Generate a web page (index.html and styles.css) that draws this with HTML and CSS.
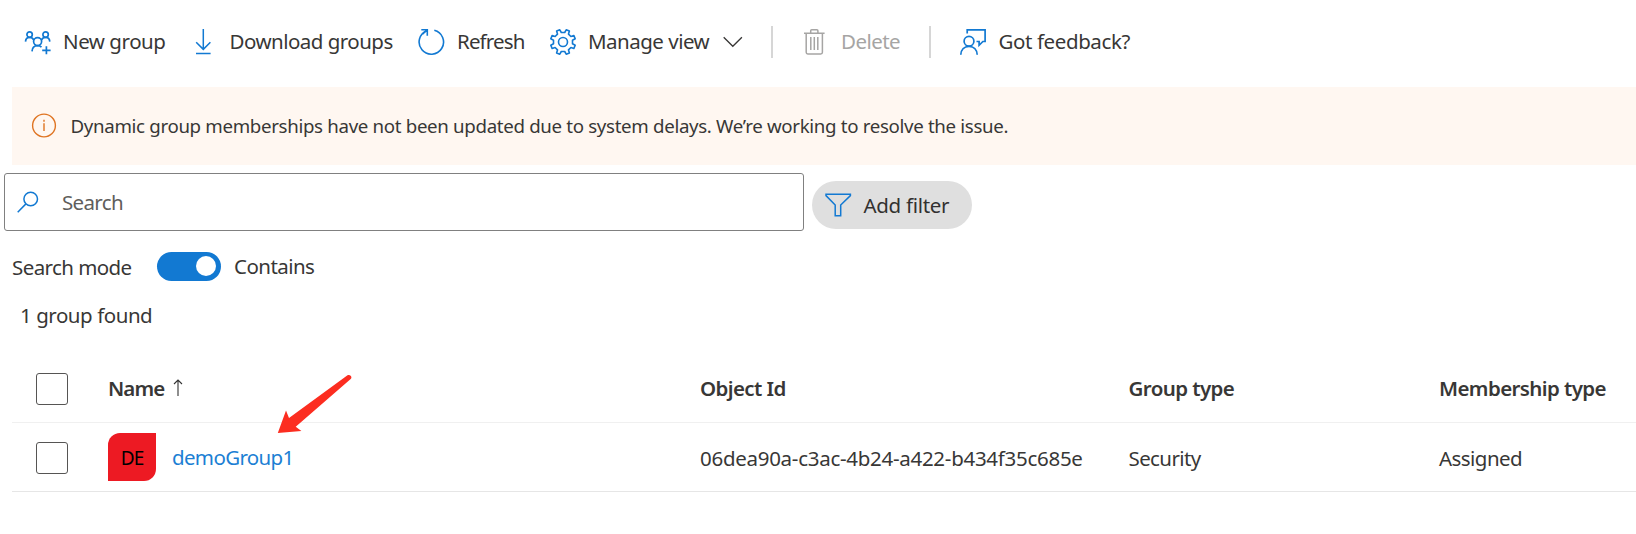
FILE: index.html
```
<!DOCTYPE html>
<html lang="en">
<head>
<meta charset="utf-8">
<title>Groups</title>
<link rel="stylesheet" href="styles.css">
</head>
<body>
<main class="page">
  <nav class="toolbar">
    <button class="cmd cmd-new">
      <svg class="icon" width="28" height="26" viewBox="0 0 28 26" fill="none" stroke="currentColor" stroke-width="1.7">
        <circle cx="5.6" cy="5.600" r="2.700"/><circle cx="21.600" cy="5.600" r="2.700"/><circle cx="13.600" cy="12.600" r="4"/>
        <path d="M1.500 12.600C1.700 10 3.300 8.400 5.600 8.400c1.900 0 3.400 1 4.200 2.600M25.800 12.600c-.2-2.600-1.900-4.200-4.200-4.200-1.900 0-3.400 1-4.200 2.600M8 22.400c.2-3.800 2.400-5.800 5.600-5.800 1.500 0 2.900.5 3.900 1.500M22.400 17.300v8M18.200 21.300h8.400"/>
      </svg>
      <span class="t-new">New group</span>
    </button>
    <button class="cmd cmd-download">
      <svg class="icon" width="18" height="28" viewBox="0 0 18 28" fill="none" stroke="currentColor" stroke-width="1.500">
        <path d="M9.300 1v20.500M2.200 14.200l7.100 7.200 7.100-7.200M2 25.500h14.600"/>
      </svg>
      <span class="t-download">Download groups</span>
    </button>
    <button class="cmd cmd-refresh">
      <svg class="icon" width="28" height="28" viewBox="0 0 28 28" fill="none" stroke="currentColor" stroke-width="1.600">
        <path d="M17.300 2.200A12.200 12.200 0 1 1 9.800 2.700M4.300 1.700h6v6"/>
        <path d="M10.300 1.700L5.500 6.100"/>
      </svg>
      <span class="t-refresh">Refresh</span>
    </button>
    <button class="cmd cmd-view">
      <svg class="icon" width="28" height="28" viewBox="0 0 28 28" fill="none" stroke="currentColor" stroke-width="1.600" stroke-linejoin="round">
        <circle cx="14" cy="14" r="4.500"/>
        <path d="M10.800 1.800L12.300 4.500h3.400l1.500-2.700 3.200 1.300-.9 3 2.400 2.400 3-.9 1.300 3.200-2.700 1.500v3.400l2.700 1.500-1.300 3.200-3-.9-2.400 2.400.9 3-3.200 1.300-1.500-2.700h-3.400l-1.500 2.700-3.200-1.300.9-3-2.400-2.400-3 .9-1.300-3.200 2.700-1.500v-3.400l-2.700-1.500 1.300-3.200 3 .9 2.400-2.400-.9-3z"/>
      </svg>
      <span class="t-view">Manage view</span>
      <svg class="chevron" width="20" height="12" viewBox="0 0 20 12" fill="none" stroke="currentColor" stroke-width="1.300">
        <path d="M.7 1.200l9.100 9.100 9.100-9.100"/>
      </svg>
    </button>
    <span class="divider"></span>
    <button class="cmd cmd-delete" disabled>
      <svg class="icon" width="23" height="28" viewBox="0 0 23 28" fill="none" stroke="currentColor" stroke-width="1.500">
        <path d="M1 5.300h20.600M7.700 5V2.800c0-.6.4-1 1-1h5.200c.6 0 1 .4 1 1V5M3.200 5.300v19c0 1 .6 1.600 1.600 1.600h13c1 0 1.600-.6 1.600-1.600v-19M7.800 9v13M11.300 9v13M14.800 9v13"/>
      </svg>
      <span class="t-delete">Delete</span>
    </button>
    <span class="divider"></span>
    <button class="cmd cmd-feedback">
      <svg class="icon" width="28" height="28" viewBox="0 0 28 28" fill="none" stroke="currentColor" stroke-width="1.700">
        <circle cx="10" cy="13.200" r="4.900"/>
        <path d="M1.800 26.800c.2-5.200 3.500-8.500 8.200-8.500s8 3.300 8.200 8.500M8.200 5.600V1.900h17.900v11.600h-2.200l-3.800 3.800v-3.800h-2.600"/>
      </svg>
      <span class="t-feedback">Got feedback?</span>
    </button>
  </nav>

  <div class="banner" role="status">
    <svg width="26" height="26" viewBox="0 0 26 26" fill="none" stroke="#df7422" stroke-width="1.400">
      <circle cx="13" cy="12.500" r="11.400"/><path d="M13 10.300v7.700M13 6.800v1.900"/>
    </svg>
    <span class="t-banner">Dynamic group memberships have not been updated due to system delays. We’re working to resolve the issue.</span>
  </div>

  <div class="filters">
    <div class="search">
      <svg width="22" height="22" viewBox="0 0 22 22" fill="none" stroke="currentColor" stroke-width="1.500">
        <circle cx="13.700" cy="8" r="6.800"/><path d="M.7 21.200l8.200-8.300"/>
      </svg>
      <span class="t-search">Search</span>
    </div>
    <button class="pill">
      <svg width="27" height="24" viewBox="0 0 27 24" fill="none" stroke="currentColor" stroke-width="1.500">
        <path d="M1 1.200h24.400v1.400L15.700 12v10.800h-5.500V12L1 2.600z"/>
      </svg>
      <span class="t-filter">Add filter</span>
    </button>
  </div>

  <div class="mode">
    <span class="t-mode">Search mode</span>
    <span class="toggle" role="switch" aria-checked="true"><span class="knob"></span></span>
    <span class="t-contains">Contains</span>
  </div>

  <p class="count">1 group found</p>

  <section class="table">
    <div class="row head">
      <span class="check"></span>
      <span class="name-head"><span class="t-name">Name</span>
        <svg width="10" height="18" viewBox="0 0 10 18" fill="none" stroke="#333" stroke-width="1.100"><path d="M5 1v16M1 5l4-4 4 4"/></svg>
      </span>
      <span class="t-object">Object Id</span>
      <span class="t-type">Group type</span>
      <span class="t-member">Membership type</span>
    </div>
    <div class="row body">
      <span class="check"></span>
      <span class="name-cell"><span class="avatar">DE</span><a class="link">demoGroup1</a></span>
      <span class="t-id">06dea90a-c3ac-4b24-a422-b434f35c685e</span>
      <span class="t-security">Security</span>
      <span class="t-assigned">Assigned</span>
    </div>
    <svg class="pointer" width="76" height="60" viewBox="0 0 76 60" fill="#fc2d20">
      <path d="M70.500 1.200c2.600-1.300 5.200 1.600 3.200 3.900L18.700 52.700l5.700 4.400L.8 58.900 9 36.500l3 7.500z"/>
    </svg>
  </section>
</main>
</body>
</html>
```
FILE: styles.css
```
* { box-sizing: border-box; }
body {
  margin: 0;
  background: #fff;
  color: #383736;
  font: 20.5px/28px "Noto Sans", "Open Sans", sans-serif;
  overflow: hidden;
}
.page { width: 1636px; height: 534px; white-space: nowrap; }
svg { display: block; flex: none; }
button { font: inherit; color: inherit; border: 0; padding: 0; background: none; }

.toolbar { display: flex; align-items: center; height: 83px; padding-left: 24px; margin-bottom: 4px; }
.cmd { display: flex; align-items: center; flex: none; text-align: left; }
.cmd span { padding-bottom: 2px; }
.icon { color: #1279d2; }
.cmd-new { width: 170px; gap: 11px; }
.cmd-download { width: 223px; gap: 17.5px; }
.cmd-refresh { width: 132px; gap: 12px; }
.cmd-view { width: 222px; gap: 11px; }
.t-view { width: 124px; }
.cmd-delete { width: 96px; margin: 0 30px; gap: 15px; color: #a6a5a4; }
.cmd-delete .icon { color: #a6a5a4; }
.cmd-feedback { margin-left: 28px; gap: 11.5px; }
.divider { width: 2px; height: 32px; background: #d6d6d6; flex: none; }

.t-new { letter-spacing: -.45px; }
.t-download { letter-spacing: -.52px; }
.t-refresh { letter-spacing: -.85px; }
.t-view { letter-spacing: -.5px; }
.t-delete { letter-spacing: -.55px; }
.t-feedback { letter-spacing: -.4px; }

.banner {
  display: flex; align-items: center; gap: 13.5px;
  height: 78px; margin-left: 12px; padding-left: 19px;
  background: #fff7f1;
}
.t-banner { font-size: 18.7px; letter-spacing: -.325px; }

.filters { display: flex; gap: 8px; padding: 8px 0 0 4px; }
.search {
  display: flex; align-items: center; gap: 23.5px;
  width: 800px; height: 58px; padding-left: 11.5px;
  border: 1px solid #808080; border-radius: 3px; color: #1279d2;
}
.t-search { color: #605e5c; letter-spacing: -.65px; }
.pill {
  display: flex; align-items: center; gap: 12px;
  width: 160px; height: 48px; margin-top: 8px; padding-left: 12.5px;
  border-radius: 24px; background: #dfdfdf; color: #1279d2;
}
.t-filter { color: #323130; letter-spacing: -.3px; }

.mode { display: flex; align-items: center; height: 30px; margin-top: 20px; padding-left: 12px; }
.t-mode { width: 145px; padding-top: 1px; letter-spacing: -.58px; }
.toggle {
  display: flex; align-items: center; justify-content: flex-end;
  width: 64px; height: 29px; margin-right: 13px; padding-right: 5px;
  border-radius: 15px; background: #1279d2;
}
.knob { width: 20px; height: 20px; border-radius: 50%; background: #fff; }
.t-contains { letter-spacing: -.55px; }
.count { margin: 20px 0 0 20px; letter-spacing: -.45px; }

.table { position: relative; margin: 27px 0 0 12px; }
.row { display: grid; grid-template-columns: 72px 592px 428.5px 310.5px 1fr; align-items: center; padding-left: 24px; }
.head { height: 67px; border-bottom: 1px solid #f0f0f0; font-weight: 600; letter-spacing: -.6px; }
.head > span:not(.check) { padding-bottom: 2px; }
.body { height: 69px; border-bottom: 1px solid #e6e6e6; }
.body > span:not(.name-cell) { margin-top: 2px; }
.check { width: 32px; height: 32px; border: 1px solid #565554; border-radius: 3px; }
.name-head { display: flex; align-items: center; gap: 8.500px; }
.t-name { letter-spacing: -.9px; }
.name-cell { display: flex; align-items: center; gap: 16px; }
.avatar {
  display: grid; place-items: center;
  width: 48px; height: 48px; border-radius: 12px 0 12px 0;
  background: #ed1a23; color: #000; font-size: 19px; letter-spacing: -1px; padding-top: 2px;
}
.link { color: #1c7fd4; letter-spacing: -.65px; }
.t-id { letter-spacing: -.28px; }
.t-security { letter-spacing: -.6px; }
.t-assigned { letter-spacing: -.55px; }
.pointer { position: absolute; left: 265px; top: 18px; }
```
